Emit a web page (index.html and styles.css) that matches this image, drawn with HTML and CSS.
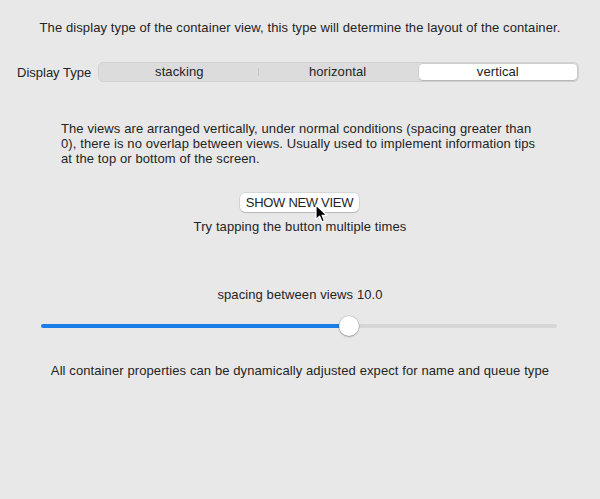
FILE: index.html
```html
<!DOCTYPE html>
<html>
<head>
<meta charset="utf-8">
<link rel="stylesheet" href="styles.css">
</head>
<body>
<div class="page">
  <p class="intro">The display type of the container view, this type will determine the layout of the container.</p>
  <div class="type-row">
    <span class="type-label">Display Type</span>
    <div class="segmented">
      <div class="seg">stacking</div>
      <div class="seg divider">horizontal</div>
      <div class="seg selected">vertical</div>
    </div>
  </div>
  <p class="desc">The views are arranged vertically, under normal conditions (spacing greater than 0), there is no overlap between views. Usually used to implement information tips at the top or bottom of the screen.</p>
  <div class="btn-wrap">
    <button class="show-btn">SHOW NEW VIEW</button>
  </div>
  <p class="hint">Try tapping the button multiple times</p>
  <p class="spacing">spacing between views 10.0</p>
  <div class="slider">
    <div class="track">
      <div class="fill" style="width: 308px"></div>
      <div class="thumb" style="left: 298px"></div>
    </div>
  </div>
  <p class="footer">All container properties can be dynamically adjusted expect for name and queue type</p>
  <svg class="cursor" width="14" height="20" viewBox="0 0 14 20">
    <path d="M1 1 L1 15.5 L4.6 12.2 L7 17.8 L9.4 16.8 L7.1 11.3 L11.8 11.3 Z" fill="#000" stroke="#fff" stroke-width="1.2" stroke-linejoin="round"/>
  </svg>
</div>
</body>
</html>
```

FILE: styles.css
```css
html, body {
  margin: 0;
  padding: 0;
  background: #e8e8e8;
}
body {
  font-family: "Liberation Sans", Arial, sans-serif;
  font-size: 13px;
  line-height: 15px;
  letter-spacing: 0.1px;
  color: #242424;
}
.page {
  position: relative;
  width: 600px;
  height: 499px;
  display: flex;
  flex-direction: column;
}
p { margin: 0; }
.intro {
  margin-top: 20px;
  text-align: center;
}
.type-row {
  margin-top: 27px;
  display: flex;
  align-items: center;
  padding: 0 21px 0 17px;
  gap: 7px;
  height: 20px;
}
.type-label {
  white-space: nowrap;
  letter-spacing: 0;
}
.segmented {
  flex: 1;
  height: 20px;
  box-sizing: border-box;
  display: flex;
  background: #dcdcdc;
  border: 1px solid #d2d2d2;
  border-radius: 5px;
  padding: 1px;
}
.seg {
  flex: 1;
  display: flex;
  align-items: center;
  justify-content: center;
  position: relative;
  padding-bottom: 1px;
}
.seg.divider::before {
  content: "";
  position: absolute;
  left: 0;
  top: 4px;
  bottom: 4px;
  width: 1px;
  background: #c4c4c4;
}
.seg.selected {
  margin-left: 2px;
  background: #ffffff;
  border-radius: 4px;
  box-shadow: 0 0 0 0.5px rgba(0,0,0,0.12), 0 1px 1px rgba(0,0,0,0.12);
}
.desc {
  margin-top: 39px;
  padding-left: 61px;
  width: 478px;
}
.btn-wrap {
  margin-top: 27px;
  display: flex;
  justify-content: center;
}
.show-btn {
  font-family: inherit;
  font-size: 13px;
  letter-spacing: -0.3px;
  color: #242424;
  width: 119px;
  height: 19px;
  padding: 0;
  margin-left: -1px;
  background: #ffffff;
  border: none;
  border-radius: 5px;
  box-shadow: 0 0 0 0.5px rgba(0,0,0,0.15), 0 1px 1px rgba(0,0,0,0.15);
}
.hint {
  margin-top: 7px;
  text-align: center;
}
.spacing {
  margin-top: 53px;
  text-align: center;
}
.slider {
  margin-top: 14px;
  padding: 0 43px 0 41px;
  height: 20px;
  display: flex;
  align-items: center;
}
.track {
  position: relative;
  flex: 1;
  height: 4px;
  border-radius: 2px;
  background: #d6d6d6;
}
.fill {
  height: 4px;
  border-radius: 2px;
  background: #1a7ee8;
}
.thumb {
  position: absolute;
  top: -8px;
  width: 20px;
  height: 20px;
  border-radius: 50%;
  background: #ffffff;
  box-shadow: 0 0 0 0.5px rgba(0,0,0,0.18), 0 1px 2px rgba(0,0,0,0.25);
}
.footer {
  margin-top: 27px;
  text-align: center;
}
.cursor {
  position: absolute;
  left: 315px;
  top: 204px;
}
```
